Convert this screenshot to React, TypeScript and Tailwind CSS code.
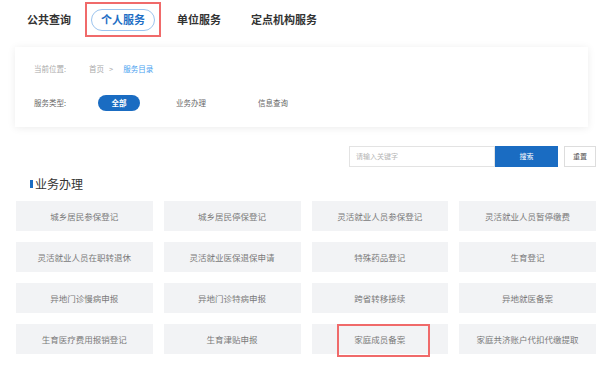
const services = [
  "城乡居民参保登记",
  "城乡居民停保登记",
  "灵活就业人员参保登记",
  "灵活就业人员暂停缴费",
  "灵活就业人员在职转退休",
  "灵活就业医保退保申请",
  "特殊药品登记",
  "生育登记",
  "异地门诊慢病申报",
  "异地门诊特病申报",
  "跨省转移接续",
  "异地就医备案",
  "生育医疗费用报销登记",
  "生育津贴申报",
  "家庭成员备案",
  "家庭共济账户代扣代缴提取",
];

const font = "font-['Noto_Sans_CJK_SC','Noto_Sans',sans-serif]";

export default function App() {
  return (
    <div className={`${font} h-[366px] w-[600px] overflow-hidden bg-white`}>
      <nav className="flex h-[39px] items-center pl-[27px] text-[11px] font-bold text-[#333]">
        <span>公共查询</span>
        <div className="ml-[14px] flex h-[35px] items-center border-2 border-[#f06a6a] px-[4px]">
          <span className="flex h-[22px] w-[64px] items-center justify-center rounded-full border border-[#9cc4ee] text-[#1f6fc5]">
            个人服务
          </span>
        </div>
        <span className="ml-[16px]">单位服务</span>
        <span className="ml-[30px]">定点机构服务</span>
      </nav>

      <section className="ml-[15px] mt-[8px] flex h-[80px] w-[573px] flex-col justify-center gap-[20px] bg-white pl-[19px] shadow-[0_1px_8px_rgba(0,0,0,0.08)]">
        <div className="flex items-center text-[7.5px] text-[#aaa]">
          <span>当前位置:</span>
          <span className="ml-[23px]">首页</span>
          <span className="ml-[5px]">&gt;</span>
          <span className="ml-[10px] text-[#4a9ff0]">服务目录</span>
        </div>
        <div className="flex items-center text-[7.5px] text-[#666]">
          <span>服务类型:</span>
          <span className="ml-[32px] flex h-[16px] w-[42px] items-center justify-center rounded-full bg-[#1a6cc2] font-bold text-white">
            全部
          </span>
          <span className="ml-[36px]">业务办理</span>
          <span className="ml-[52px]">信息查询</span>
        </div>
      </section>

      <div className="mt-[19px] flex items-center pl-[349px]">
        <div className="flex h-[21px] w-[146px] items-center border border-[#e3e3e3] pl-[6px] text-[7px] text-[#b5b5b5]">
          请输入关键字
        </div>
        <button className="flex h-[21px] w-[63px] items-center justify-center bg-[#1a6cc2] text-[7px] text-white">
          搜索
        </button>
        <button className="ml-[6px] flex h-[21px] w-[32px] items-center justify-center border border-[#ddd] text-[7px] text-[#555]">
          重置
        </button>
      </div>

      <div className="mt-[8px] flex items-center pl-[30px]">
        <span className="h-[8px] w-[3px] bg-[#1a6cc2]" />
        <span className="ml-[2px] text-[12px] text-[#333]">业务办理</span>
      </div>

      <div className="ml-[16px] mt-[8px] grid w-[580px] grid-cols-4 gap-x-[11px] gap-y-[11px]">
        {services.map((s) => (
          <div
            key={s}
            className="relative flex h-[30px] items-center justify-center bg-[#f2f3f5] text-[8.5px] text-[#7a7a7a]"
          >
            {s}
            {s === "家庭成员备案" && (
              <span className="absolute left-[25px] top-0 h-[33px] w-[93px] border-2 border-[#f06a6a]" />
            )}
          </div>
        ))}
      </div>
    </div>
  );
}
